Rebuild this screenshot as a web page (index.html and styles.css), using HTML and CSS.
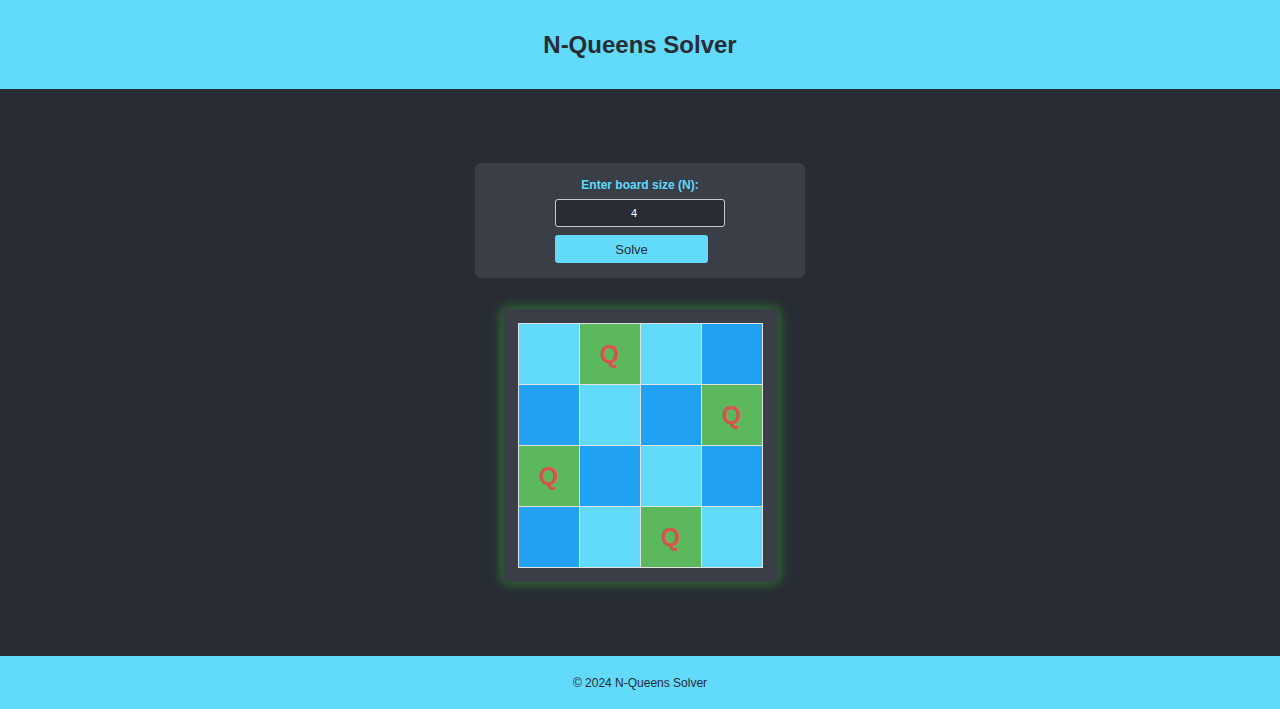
FILE: index.html
```html
<!DOCTYPE html>
<html lang="en">
<head>
<meta charset="utf-8">
<title>N-Queens Solver</title>
<link rel="stylesheet" href="styles.css">
</head>
<body>
<header class="site-header">
  <h1 class="title">N-Queens Solver</h1>
</header>
<main class="main">
  <section class="controls">
    <label class="label" for="size">Enter board size (N):</label>
    <div class="form">
      <input class="size-input" id="size" type="number" value="4">
      <button class="solve-btn" type="button">Solve</button>
    </div>
  </section>
  <section class="board-wrap">
    <div class="board">
      <div class="cell light"></div>
      <div class="cell queen">Q</div>
      <div class="cell light"></div>
      <div class="cell dark"></div>

      <div class="cell dark"></div>
      <div class="cell light"></div>
      <div class="cell dark"></div>
      <div class="cell queen">Q</div>

      <div class="cell queen">Q</div>
      <div class="cell dark"></div>
      <div class="cell light"></div>
      <div class="cell dark"></div>

      <div class="cell dark"></div>
      <div class="cell light"></div>
      <div class="cell queen">Q</div>
      <div class="cell light"></div>
    </div>
  </section>
</main>
<footer class="site-footer">
  <p class="copy">© 2024 N-Queens Solver</p>
</footer>
</body>
</html>
```
FILE: styles.css
```css
* { box-sizing: border-box; }
html, body { height: 100%; }
body {
  margin: 0;
  font-family: "Liberation Sans", Arial, sans-serif;
  background: #282c34;
  color: #282c34;
  display: flex;
  flex-direction: column;
  min-height: 709px;
}
.site-header {
  background: #61dafb;
  height: 89px;
  display: flex;
  align-items: center;
  justify-content: center;
}
.title {
  margin: 0;
  font-size: 24px;
  font-weight: bold;
  color: #282c34;
  line-height: 28px;
}
.main {
  flex: 1;
  display: flex;
  flex-direction: column;
  align-items: center;
  justify-content: center;
  gap: 31px;
}
.controls {
  width: 330px;
  background: #3a3f47;
  border-radius: 6px;
  padding: 15px 20px;
  display: flex;
  flex-direction: column;
  align-items: center;
}
.label {
  color: #61dafb;
  font-weight: bold;
  font-size: 12px;
  line-height: 15px;
  margin-bottom: 6px;
}
.form {
  width: 170px;
  display: flex;
  flex-direction: column;
  gap: 8px;
}
.size-input {
  width: 100%;
  height: 28px;
  background: #282c34;
  color: #ffffff;
  border: 1px solid #c8c8c8;
  border-radius: 3px;
  text-align: center;
  padding: 0 14px 0 2px;
  font-family: "Liberation Sans", Arial, sans-serif;
  font-size: 11px;
  appearance: textfield;
  -moz-appearance: textfield;
}
.size-input::-webkit-inner-spin-button,
.size-input::-webkit-outer-spin-button { -webkit-appearance: none; margin: 0; }
.solve-btn {
  width: 90%;
  height: 28px;
  background: #61dafb;
  color: #282c34;
  border: none;
  border-radius: 3px;
  font-family: "Liberation Sans", Arial, sans-serif;
  font-size: 13px;
  padding: 0;
}
.board-wrap {
  background: #3a3f47;
  padding: 14px 15px 14px 15px;
  border-radius: 5px;
  box-shadow: 0 0 12px 2px rgba(60, 200, 60, 0.45);
}
.board {
  display: grid;
  grid-template-columns: repeat(4, 60px);
  grid-template-rows: repeat(4, 60px);
  gap: 1px;
  padding: 1px;
  background: #e2e2e2;
  width: 245px;
}
.cell {
  display: flex;
  align-items: center;
  justify-content: center;
  font-size: 25px;
  font-weight: bold;
  color: #d9534f;
}
.light { background: #61dafb; }
.dark { background: #21a1f1; }
.queen { background: #5cb85c; }
.site-footer {
  background: #61dafb;
  height: 53px;
  display: flex;
  align-items: center;
  justify-content: center;
}
.copy {
  margin: 0;
  font-size: 12px;
  color: #282c34;
}
```
